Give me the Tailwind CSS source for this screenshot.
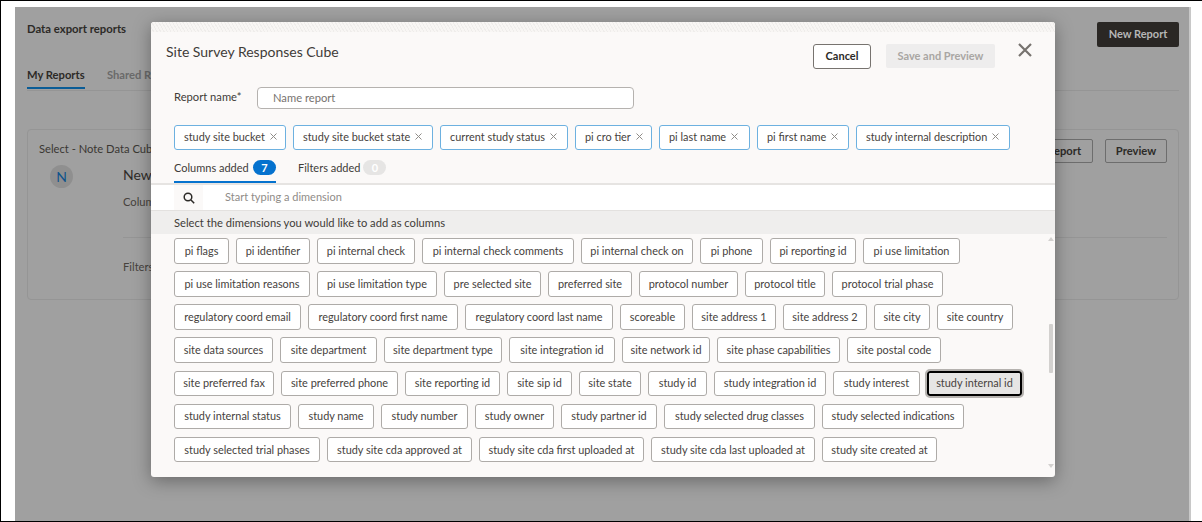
<!DOCTYPE html>
<html><head><meta charset="utf-8"><script src="https://cdn.jsdelivr.net/npm/@tailwindcss/browser@4"></script></head>
<body class="m-0 bg-white">
<div class="relative w-[1202px] h-[522px] overflow-hidden bg-white border-t border-l border-b border-black font-['Lato',sans-serif] text-[#46423d] text-[11.2px]">
  <div class="ml-[14px] mt-[6px] w-[1176px] h-[514px] bg-[#a0a0a0] pl-[12px] pr-[10px] border-r-2 border-[#c8c8c8]">
    <div class="flex justify-between pt-[15px] h-[40px]">
      <div class="text-[11.3px] font-bold text-[#2c2a27] leading-[14px]">Data export reports</div>
      <div class="bg-[#2a2724] rounded-[2px] w-[82px] h-[25px] text-[11px] font-bold text-[#b6b6b6] flex items-center justify-center">New Report</div>
    </div>
    <div class="flex gap-[22px] mt-[20px] border-b border-[#959595] h-[24px] leading-[16px]">
      <div class="font-bold text-[#2c2a27] border-b-2 border-[#0a5c96] h-[22px] w-[58px] whitespace-nowrap">My Reports</div>
      <div class="text-[#6a6a6a] font-bold">Shared Reports</div>
    </div>
    <div class="mt-[38px] h-[171px] border border-[#959595] rounded-[4px] px-[11px] pt-[9px]">
      <div class="flex justify-between items-start">
        <div class="pt-[2px] leading-[16px] text-[#3a3733]">Select - Note Data Cube</div>
        <div class="flex gap-[12px]">
          <div class="w-[80px] h-[24px] border border-[#6d6d6d] rounded-[2px] flex items-center justify-center font-bold text-[#2c2a27]">Edit Report</div>
          <div class="w-[62px] h-[24px] border border-[#6d6d6d] rounded-[2px] flex items-center justify-center font-bold text-[#2c2a27]">Preview</div>
        </div>
      </div>
      <div class="flex">
        <div class="w-[84px] pl-[11px] pt-[2px]"><div class="w-[23px] h-[23px] rounded-full bg-[#8f8f8f] flex items-center justify-center text-[#0f548c] text-[14px]">N</div></div>
        <div class="flex-1">
          <div class="pt-[2px] text-[14px] leading-[20px] text-[#2f2c29]">New</div>
          <div class="mt-[9px] leading-[16px]">Columns</div>
          <div class="mt-[27px] border-t border-[#959595]"></div>
          <div class="mt-[21px] leading-[16px]">Filters</div>
        </div>
      </div>
    </div>
  </div>

  <div class="absolute left-[150px] top-[21px] w-[904px] h-[455px] bg-[#fbf9f8] rounded-[3px] shadow-[0_4px_18px_rgba(0,0,0,0.35)] overflow-hidden flex flex-col">
    <div class="h-[10px] bg-[repeating-linear-gradient(60deg,#f8f6f4_0px,#f8f6f4_2px,#efedeb_2px,#efedeb_3px)]"></div>
    <div class="flex items-start pl-[15px] pr-[22px] pt-[12px] h-[55px]">
      <div class="text-[14px] leading-[20px] text-[#3f3c38] mt-[-2px] flex-1">Site Survey Responses Cube</div>
      <div class="w-[58px] h-[25px] bg-white border border-[#77736f] rounded-[3px] flex items-center justify-center font-bold text-[#2c2a27] text-[11px]">Cancel</div>
      <div class="w-[109px] h-[24px] ml-[15px] bg-[#eeeded] rounded-[2px] flex items-center justify-center font-bold text-[#a9a6a3] text-[11px]">Save and Preview</div>
      <svg class="ml-[22px] mt-[-2px] w-[16px] h-[16px]" viewBox="0 0 16 16" fill="none" stroke="#77736f" stroke-width="2.2"><path d="M2 2L14 14M14 2L2 14"/></svg>
    </div>
    <div class="flex items-center pl-[23px] h-[22px]">
      <div class="w-[83px] text-[#3f3c38] mt-[-1px]">Report name*</div>
      <div class="w-[377px] h-[22px] bg-white border border-[#b5b2af] rounded-[4px] pl-[15px] flex items-center text-[#77736f]">Name report</div>
    </div>
    <div class="flex gap-[7px] pl-[23px] mt-[16px] text-[10.9px] [&>div]:h-[25px] [&>div]:bg-white [&>div]:border-[1.5px] [&>div]:border-[#6db1e0] [&>div]:rounded-[3px] [&>div]:flex [&>div]:items-center [&>div]:pl-[9px] [&>div]:gap-[5px] [&>div]:whitespace-nowrap">
      <div class="w-[112px]">study site bucket<svg class="w-[7px] h-[7px] mt-[-2px]" viewBox="0 0 7 7" fill="none" stroke="#8f8c88"><path d="M.5.5l6 6M6.5.5l-6 6"/></svg></div>
      <div class="w-[140px]">study site bucket state<svg class="w-[7px] h-[7px] mt-[-2px]" viewBox="0 0 7 7" fill="none" stroke="#8f8c88"><path d="M.5.5l6 6M6.5.5l-6 6"/></svg></div>
      <div class="w-[128px]">current study status<svg class="w-[7px] h-[7px] mt-[-2px]" viewBox="0 0 7 7" fill="none" stroke="#8f8c88"><path d="M.5.5l6 6M6.5.5l-6 6"/></svg></div>
      <div class="w-[77px]">pi cro tier<svg class="w-[7px] h-[7px] mt-[-2px]" viewBox="0 0 7 7" fill="none" stroke="#8f8c88"><path d="M.5.5l6 6M6.5.5l-6 6"/></svg></div>
      <div class="w-[91px]">pi last name<svg class="w-[7px] h-[7px] mt-[-2px]" viewBox="0 0 7 7" fill="none" stroke="#8f8c88"><path d="M.5.5l6 6M6.5.5l-6 6"/></svg></div>
      <div class="w-[92px]">pi first name<svg class="w-[7px] h-[7px] mt-[-2px]" viewBox="0 0 7 7" fill="none" stroke="#8f8c88"><path d="M.5.5l6 6M6.5.5l-6 6"/></svg></div>
      <div class="w-[154px]">study internal description<svg class="w-[7px] h-[7px] mt-[-2px]" viewBox="0 0 7 7" fill="none" stroke="#8f8c88"><path d="M.5.5l6 6M6.5.5l-6 6"/></svg></div>
    </div>
    <div class="flex gap-[22px] pl-[23px] mt-[5px] h-[28px] text-[#3f3c38] whitespace-nowrap text-[11px]">
      <div class="h-[28px] w-[102px] border-b-2 border-[#0572ce] flex items-start justify-between pt-[5px] leading-[16px]">Columns added<span class="w-[23px] h-[15px] rounded-full bg-[#0572ce] text-white text-[11px] font-bold flex items-center justify-center">7</span></div>
      <div class="flex items-start gap-[3px] pt-[5px] leading-[16px]">Filters added<span class="w-[23px] h-[15px] rounded-full bg-[#e6e5e4] text-white text-[11px] font-bold flex items-center justify-center">0</span></div>
    </div>
    <div class="h-[2px] bg-[#e6e4e2]"></div>
    <div class="flex h-[26px] pl-[23px] bg-white border-b border-[#e3e1df]">
      <div class="w-[29px] bg-[#fbf9f8] flex items-center justify-center"><svg class="w-[12px] h-[12px]" viewBox="0 0 12 12" fill="none" stroke="#2c2a27" stroke-width="1.5"><circle cx="5" cy="5" r="3.8"/><path d="M8 8L11.2 11.2"/></svg></div>
      <div class="pl-[22px] flex items-center text-[#8f8c88] mt-[-1px] text-[11px]">Start typing a dimension</div>
    </div>
    <div class="h-[23px] pl-[23px] pt-[1px] bg-[#efeeed] flex items-center text-[#3f3c38]">Select the dimensions you would like to add as columns</div>
    <div class="relative flex-1 pl-[23px] pt-[4px] flex flex-col gap-[7.67px] text-[10.9px]">
      <div class="flex gap-[7px] [&>div]:h-[25.5px] [&>div]:bg-white [&>div]:border [&>div]:border-[#aeaba8] [&>div]:rounded-[3px] [&>div]:flex [&>div]:items-center [&>div]:justify-center [&>div]:whitespace-nowrap">
        <div class="w-[55px]">pi flags</div><div class="w-[74px]">pi identifier</div><div class="w-[98px]">pi internal check</div><div class="w-[152px]">pi internal check comments</div><div class="w-[112px]">pi internal check on</div><div class="w-[63px]">pi phone</div><div class="w-[86px]">pi reporting id</div><div class="w-[97px]">pi use limitation</div>
      </div>
      <div class="flex gap-[7px] [&>div]:h-[25.5px] [&>div]:bg-white [&>div]:border [&>div]:border-[#aeaba8] [&>div]:rounded-[3px] [&>div]:flex [&>div]:items-center [&>div]:justify-center [&>div]:whitespace-nowrap">
        <div class="w-[136px]">pi use limitation reasons</div><div class="w-[120px]">pi use limitation type</div><div class="w-[97px]">pre selected site</div><div class="w-[84px]">preferred site</div><div class="w-[99px]">protocol number</div><div class="w-[80px]">protocol title</div><div class="w-[111px]">protocol trial phase</div>
      </div>
      <div class="flex gap-[7px] [&>div]:h-[25.5px] [&>div]:bg-white [&>div]:border [&>div]:border-[#aeaba8] [&>div]:rounded-[3px] [&>div]:flex [&>div]:items-center [&>div]:justify-center [&>div]:whitespace-nowrap">
        <div class="w-[127px]">regulatory coord email</div><div class="w-[150px]">regulatory coord first name</div><div class="w-[148px]">regulatory coord last name</div><div class="w-[65px]">scoreable</div><div class="w-[84px]">site address 1</div><div class="w-[84px]">site address 2</div><div class="w-[56px]">site city</div><div class="w-[76px]">site country</div>
      </div>
      <div class="flex gap-[7px] [&>div]:h-[25.5px] [&>div]:bg-white [&>div]:border [&>div]:border-[#aeaba8] [&>div]:rounded-[3px] [&>div]:flex [&>div]:items-center [&>div]:justify-center [&>div]:whitespace-nowrap">
        <div class="w-[99px]">site data sources</div><div class="w-[97px]">site department</div><div class="w-[118px]">site department type</div><div class="w-[106px]">site integration id</div><div class="w-[88px]">site network id</div><div class="w-[123px]">site phase capabilities</div><div class="w-[94px]">site postal code</div>
      </div>
      <div class="flex gap-[7px] [&>div]:h-[25.5px] [&>div]:bg-white [&>div]:border [&>div]:border-[#aeaba8] [&>div]:rounded-[3px] [&>div]:flex [&>div]:items-center [&>div]:justify-center [&>div]:whitespace-nowrap">
        <div class="w-[100px]">site preferred fax</div><div class="w-[117px]">site preferred phone</div><div class="w-[95px]">site reporting id</div><div class="w-[65px]">site sip id</div><div class="w-[62px]">site state</div><div class="w-[59px]">study id</div><div class="w-[112px]">study integration id</div><div class="w-[87px]">study interest</div><div class="w-[95px] !bg-[#e6e5e4] !border-2 !border-black outline outline-2 outline-[#b5b2af]">study internal id</div>
      </div>
      <div class="flex gap-[7px] [&>div]:h-[25.5px] [&>div]:bg-white [&>div]:border [&>div]:border-[#aeaba8] [&>div]:rounded-[3px] [&>div]:flex [&>div]:items-center [&>div]:justify-center [&>div]:whitespace-nowrap">
        <div class="w-[117px]">study internal status</div><div class="w-[76px]">study name</div><div class="w-[87px]">study number</div><div class="w-[79px]">study owner</div><div class="w-[96px]">study partner id</div><div class="w-[151px]">study selected drug classes</div><div class="w-[142px]">study selected indications</div>
      </div>
      <div class="flex gap-[7px] [&>div]:h-[25.5px] [&>div]:bg-white [&>div]:border [&>div]:border-[#aeaba8] [&>div]:rounded-[3px] [&>div]:flex [&>div]:items-center [&>div]:justify-center [&>div]:whitespace-nowrap">
        <div class="w-[146px]">study selected trial phases</div><div class="w-[145px]">study site cda approved at</div><div class="w-[165px]">study site cda first uploaded at</div><div class="w-[164px]">study site cda last uploaded at</div><div class="w-[115px]">study site created at</div>
      </div>
      <div class="absolute right-[2px] top-[90px] w-[4px] h-[49px] bg-[#d3d1cf] rounded-[1px]"></div>
      <div class="absolute right-[1px] top-[3px] w-0 h-0 border-x-[3px] border-x-transparent border-b-[4px] border-b-[#d3d1cf]"></div>
      <div class="absolute right-[1px] bottom-[9px] w-0 h-0 border-x-[3px] border-x-transparent border-t-[4px] border-t-[#d3d1cf]"></div>
    </div>
  </div>
</div>
</body></html>
